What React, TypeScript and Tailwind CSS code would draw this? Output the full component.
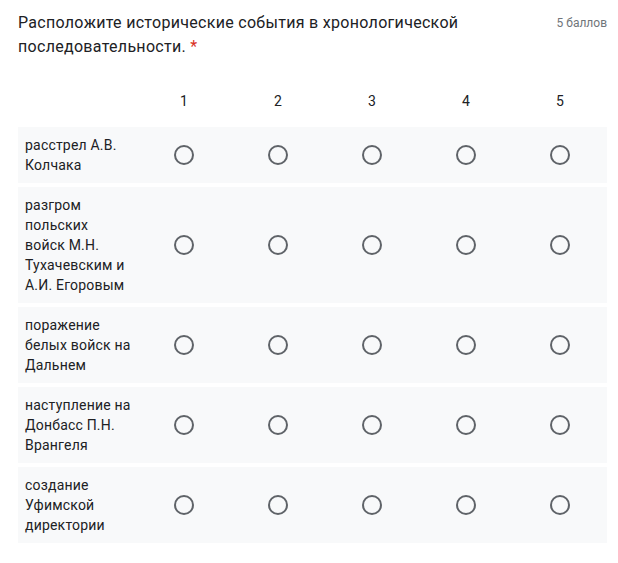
const rows = [
  ['расстрел А.В.', 'Колчака'],
  ['разгром', 'польских', 'войск М.Н.', 'Тухачевским и', 'А.И. Егоровым'],
  ['поражение', 'белых войск на', 'Дальнем'],
  ['наступление на', 'Донбасс П.Н.', 'Врангеля'],
  ['создание', 'Уфимской', 'директории'],
];

const cols = [1, 2, 3, 4, 5];

const Radio = () => (
  <div className="w-5 h-5 rounded-full border-2 border-[#5f6368]" />
);

export default function App() {
  return (
    <div className="w-[618px] h-[563px] bg-white font-['Roboto',sans-serif] text-[#202124]">
      <div className="pl-[18px] pr-[11px] pt-[11px]">
        {/* Question title */}
        <div className="flex justify-between">
          <div className="flex-1 pr-[60px] text-[16px] leading-[24px] tracking-[0.3px]">
            Расположите исторические события в хронологической последовательности.{' '}
            <span className="text-[#d93025]">*</span>
          </div>
          <div className="text-[12px] leading-[24px] text-[#70757a] whitespace-nowrap">5 баллов</div>
        </div>

        {/* Grid */}
        <div className="mt-[22px] w-[589px]">
          <div className="grid grid-cols-[119px_repeat(5,94px)] h-[40px] items-center">
            <div />
            {cols.map((c) => (
              <div key={c} className="text-center text-[14px] leading-[20px]">
                {c}
              </div>
            ))}
          </div>
          <div className="flex flex-col gap-[4px] mt-[6px]">
            {rows.map((lines) => (
              <div
                key={lines.join(' ')}
                className="grid grid-cols-[119px_repeat(5,94px)] items-center bg-[#f8f9fa]"
              >
                <div className="pl-[7px] py-[8px] text-[14px] leading-[20px] tracking-[0.2px]">
                  {lines.map((l) => (
                    <div key={l} className="whitespace-nowrap">
                      {l}
                    </div>
                  ))}
                </div>
                {cols.map((c) => (
                  <div key={c} className="flex justify-center">
                    <Radio />
                  </div>
                ))}
              </div>
            ))}
          </div>
        </div>
      </div>
    </div>
  );
}
